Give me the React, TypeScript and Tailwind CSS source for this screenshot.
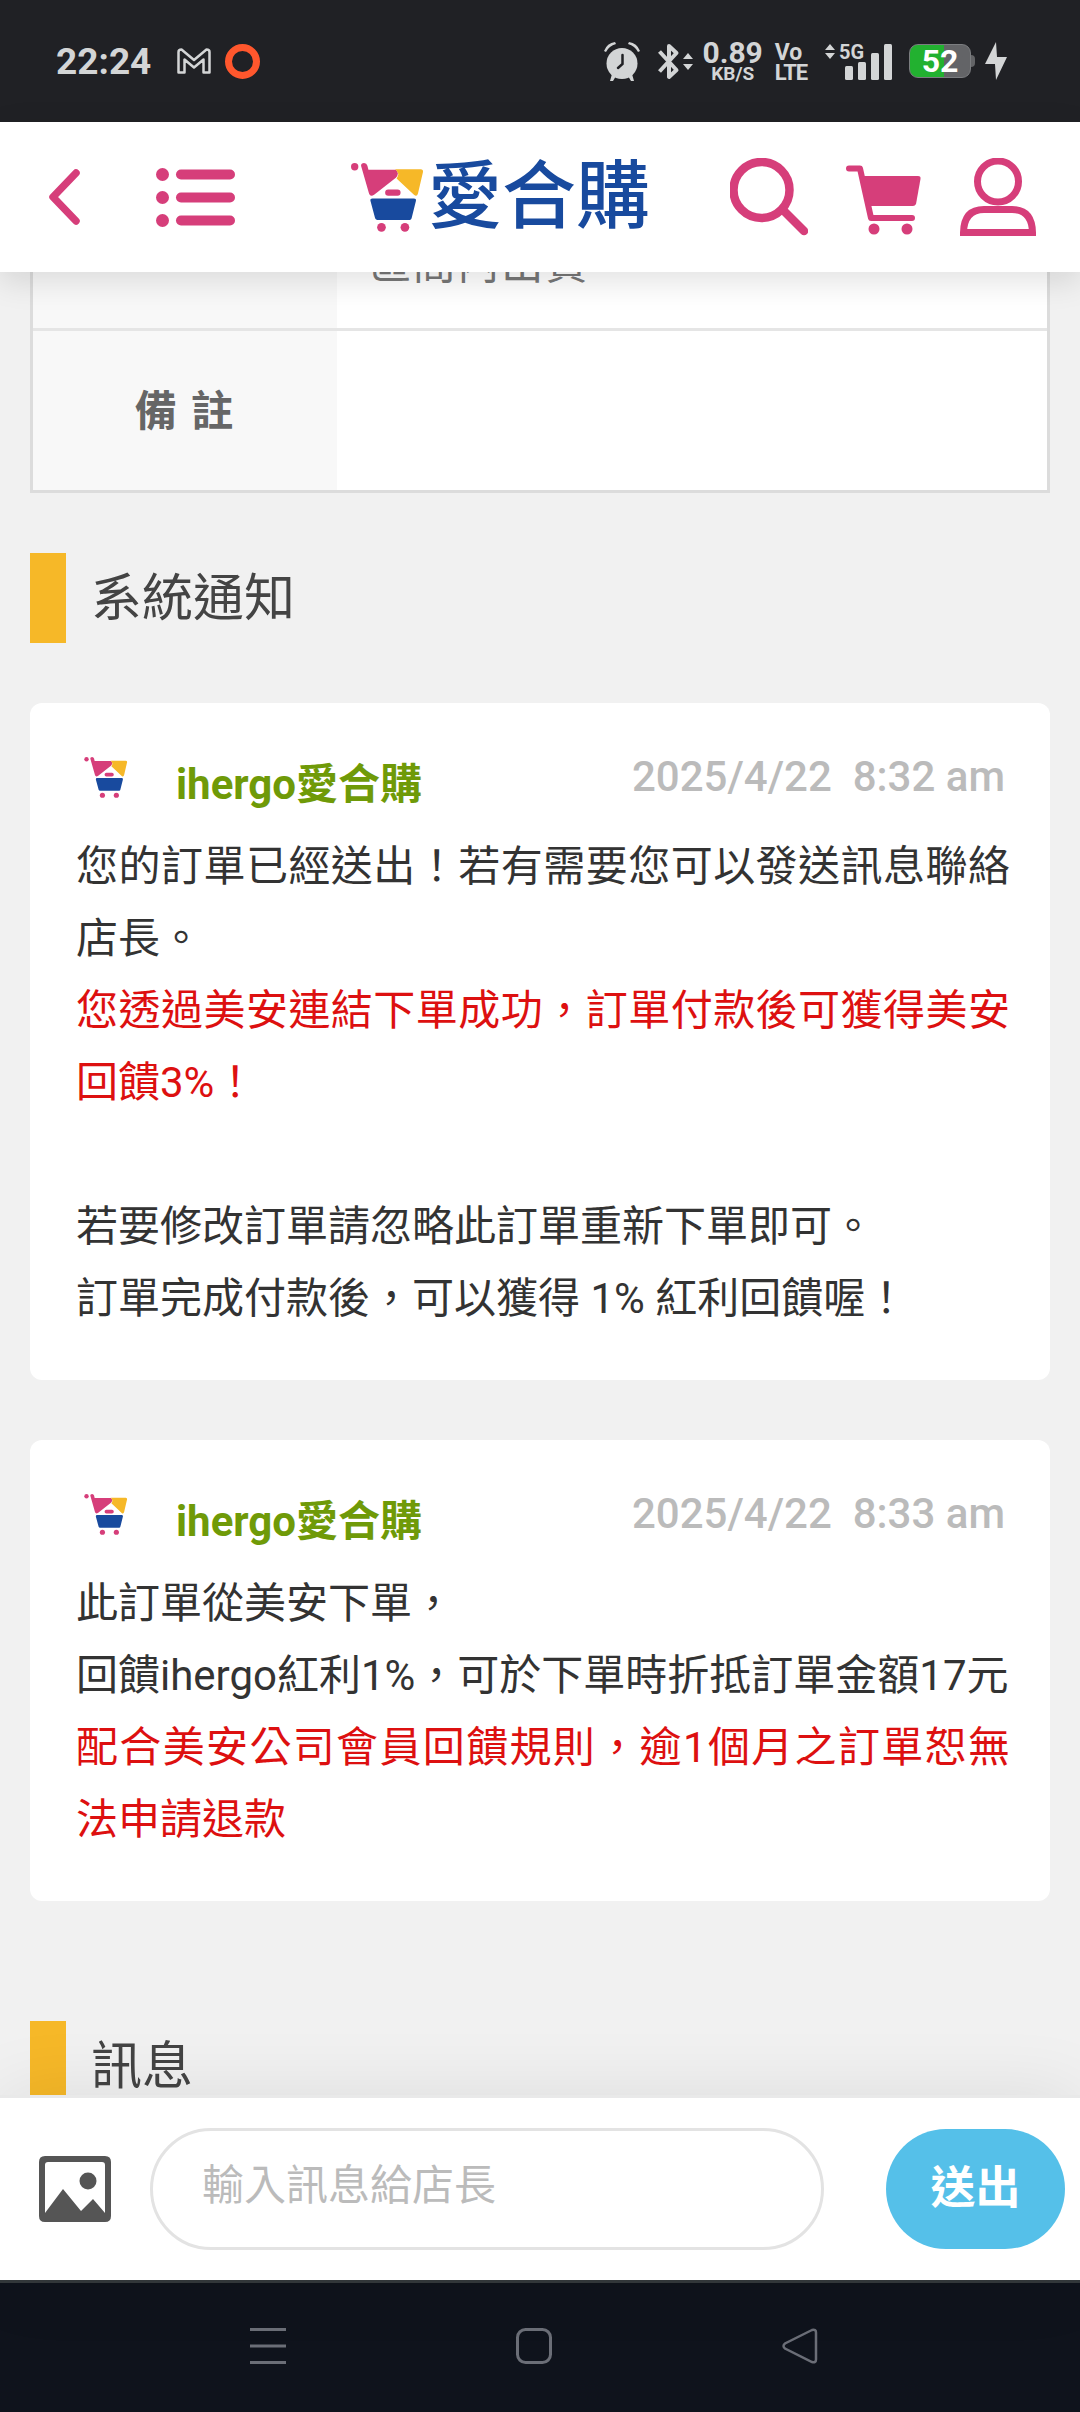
import React from 'react';

type Line = { text: string; alert?: boolean };

type Notice = {
  id: number;
  author: string;
  date: string;
  time: string;
  lines: Line[];
};

const NOTICES: Notice[] = [
  {
    id: 1,
    author: 'ihergo愛合購',
    date: '2025/4/22',
    time: '8:32 am',
    lines: [
      { text: '您的訂單已經送出！若有需要您可以發送訊息聯絡店長。' },
      { text: '您透過美安連結下單成功，訂單付款後可獲得美安回饋3%！', alert: true },
      { text: '' },
      { text: '若要修改訂單請忽略此訂單重新下單即可。' },
      { text: '訂單完成付款後，可以獲得 1% 紅利回饋喔！' },
    ],
  },
  {
    id: 2,
    author: 'ihergo愛合購',
    date: '2025/4/22',
    time: '8:33 am',
    lines: [
      { text: '此訂單從美安下單，' },
      { text: '回饋ihergo紅利1%，可於下單時折抵訂單金額17元' },
      { text: '配合美安公司會員回饋規則，逾1個月之訂單恕無法申請退款', alert: true },
    ],
  },
];

const CartLogo: React.FC<{ className: string }> = ({ className }) => (
  <svg viewBox="0 0 218 206" className={className} aria-hidden="true">
    <circle cx="11" cy="11" r="11" fill="#d63e7a" />
    <path d="M30 8q0-8 9-8 8 0 10 8l3 12h82q12 10 0 24L70 94q-12 8-16-2z" fill="#d63e7a" />
    <path d="M132 19h76q8 0 7 8l-15 64q-3 11-12 4l-52-49q12-14-4-27z" fill="#f6b828" />
    <rect x="102" y="79" width="46" height="19" rx="9" fill="#d63e7a" />
    <path d="M64 106h124q7 0 6 7l-13 52q-1 5-6 5H79q-5 0-7-5L58 113q-1-7 6-7z" fill="#184a9e" />
    <circle cx="91" cy="192" r="13" fill="#d63e7a" />
    <circle cx="161" cy="192" r="13" fill="#d63e7a" />
  </svg>
);

const StatusBar = () => (
  <div className="flex h-[122px] shrink-0 items-center justify-between bg-[#202125] pl-14 pr-[73px] text-[#d3d5d6]">
    <div className="flex items-center">
      <span className="text-[37px] leading-none font-bold">22:24</span>
      <svg viewBox="0 0 34 26" className="ml-[26px] h-[26px] w-[34px]" fill="none" stroke="currentColor" strokeWidth="2.5" strokeLinejoin="round">
        <path d="M1.5 4Q1.5 1.5 4.5 1.5L17 12 29.5 1.5Q32.5 1.5 32.5 4V24.5H26.5V11.5L17 19.5 7.5 11.5V24.5H1.5Z" />
      </svg>
      <span className="ml-[14px] size-[35px] rounded-full border-7 border-[#ff572d]" />
    </div>

    <div className="flex items-center">
      <svg viewBox="0 0 36 39" className="h-[39px] w-9" fill="currentColor">
        <circle cx="18" cy="21.5" r="15.5" />
        <path d="M0 9Q3 1 11 0L12 2Q5 4 2 10ZM36 9Q33 1 25 0L24 2Q31 4 34 10ZM8 32l4 2-3 5H6ZM28 32l-4 2 3 5h3Z" />
        <path d="M18.5 13v9l-4.5 4" fill="none" stroke="#202125" strokeWidth="2.5" strokeLinecap="round" />
      </svg>
      <svg viewBox="0 0 36 37" className="ml-[18px] h-[37px] w-9" fill="none" stroke="currentColor" strokeWidth="4">
        <path d="M1.5 8.5 18.5 27 11 34V3l7.5 7L1.5 28.5" strokeLinejoin="round" />
        <path d="M25 16l5-6 5 6ZM25 21l5 6 5-6Z" fill="currentColor" stroke="none" />
      </svg>
      <span className="ml-2 flex flex-col items-center pt-1 font-bold">
        <span className="text-[30px] leading-[22px]">0.89</span>
        <span className="text-[19px] leading-5">KB/S</span>
      </span>
      <span className="ml-3 flex flex-col pt-1 font-bold">
        <span className="text-[23px] leading-5">Vo</span>
        <span className="text-[22px] leading-5 tracking-tighter">LTE</span>
      </span>
      <svg viewBox="0 0 68 37" className="ml-[18px] h-[37px] w-[68px] overflow-visible" fill="currentColor">
        <path d="M0 7l5-6 5 6ZM0 10l5 6 5-6Z" />
        <text x="14" y="16" fontSize="20" fontWeight="700">5G</text>
        <rect x="20" y="23" width="8" height="14" rx="1.5" />
        <rect x="33" y="19" width="8" height="18" rx="1.5" />
        <rect x="46" y="10" width="8" height="27" rx="1.5" />
        <rect x="59" y="1" width="8" height="36" rx="1.5" />
      </svg>
      <span className="ml-4 flex items-center">
        <span className="flex h-[34px] w-[62px] items-center justify-center rounded-[9px] border border-[#7b7d80] bg-linear-to-r from-[#22b130] from-56% to-[#636467] to-56% text-[32px] leading-none font-bold text-white">
          52
        </span>
        <span className="h-3 w-1 rounded-r bg-[#636467]" />
      </span>
      <svg viewBox="0 0 22 38" className="ml-[10px] h-[38px] w-[22px]" fill="currentColor">
        <path d="M11 0 0 22H10L11 38 22 15H12Z" />
      </svg>
    </div>
  </div>
);

const Header = () => (
  <header className="relative z-10 flex h-[150px] shrink-0 items-center justify-between bg-white pr-11 pl-12 text-[#d63e7a] shadow-[0_9px_30px_rgba(0,0,0,0.12)]">
    <div className="mr-9 flex items-center gap-[76px]">
      <button type="button" aria-label="返回">
        <svg viewBox="0 0 32 56" className="h-14 w-8" fill="none" stroke="currentColor" strokeWidth="7.5" strokeLinecap="round" strokeLinejoin="round">
          <path d="M28 4 5 28 28 52" />
        </svg>
      </button>
      <button type="button" aria-label="選單">
        <svg viewBox="0 0 79 59" className="h-[59px] w-[79px]" fill="currentColor">
          <circle cx="6.5" cy="6.5" r="6.5" />
          <circle cx="6.5" cy="29.5" r="6.5" />
          <circle cx="6.5" cy="52.5" r="6.5" />
          <rect x="20" y="1.5" width="59" height="10" rx="5" />
          <rect x="20" y="24.5" width="59" height="10" rx="5" />
          <rect x="20" y="47.5" width="59" height="10" rx="5" />
        </svg>
      </button>
    </div>

    <a href="#home" className="flex items-center">
      <CartLogo className="h-[69px] w-[73px]" />
      <span className="ml-1 text-[74px] leading-none font-medium text-[#184a9e]">愛合購</span>
    </a>

    <div className="flex items-center gap-[38px]">
      <button type="button" aria-label="搜尋">
        <svg viewBox="0 0 78 78" className="size-[78px]" fill="none" stroke="currentColor" strokeWidth="8.5">
          <circle cx="31.5" cy="32" r="28" />
          <path d="M54 53 74 73" strokeLinecap="round" />
        </svg>
      </button>
      <button type="button" aria-label="購物車">
        <svg viewBox="0 0 76 78" className="h-[78px] w-[76px]" fill="currentColor">
          <path d="M3 10.5H14L25 60H66" fill="none" stroke="currentColor" strokeWidth="6" strokeLinecap="round" strokeLinejoin="round" />
          <path d="M16 18H72q3 0 2.5 3L70 46q-1 2-3 2H22Z" />
          <circle cx="28" cy="71" r="5.5" />
          <circle cx="61" cy="71" r="5.5" />
        </svg>
      </button>
      <button type="button" aria-label="會員">
        <svg viewBox="0 0 76 78" className="h-[78px] w-[76px]" fill="none" stroke="currentColor" strokeWidth="7">
          <circle cx="38" cy="23.5" r="20.5" />
          <path d="M3.5 74.5Q4 51.5 24 51.5H52Q72 51.5 72.5 74.5Z" />
        </svg>
      </button>
    </div>
  </header>
);

const SectionTitle: React.FC<{ children: React.ReactNode }> = ({ children }) => (
  <h2 className="flex h-[90px] items-center border-l-36 border-[#f6b828] pl-[25px] text-[51px] leading-none text-[#444]">
    {children}
  </h2>
);

const NoticeCard: React.FC<{ notice: Notice }> = ({ notice }) => (
  <article className="rounded-xl bg-white pr-10 pb-[45px] pl-[46px]">
    <div className="flex h-32 items-start pt-[54px] pr-[5px]">
      <CartLogo className="ml-2 h-[41px] w-11" />
      <span className="ml-12 pt-1 text-[42px] leading-[48px] font-bold text-[#6f9a08]">{notice.author}</span>
      <time className="ml-auto text-[42px] leading-10 font-medium whitespace-pre text-[#bbb]">
        {`${notice.date}  ${notice.time}`}
      </time>
    </div>
    {notice.lines.map((line, i) => (
      <p key={i} className={`min-h-[72px] text-justify text-[42px] leading-[72px] ${line.alert ? 'text-[#dd1010]' : 'text-[#333]'}`}>
        {line.text}
      </p>
    ))}
  </article>
);

const MessageBar = () => (
  <form
    className="relative z-10 flex shrink-0 items-center border-t-3 border-[#e9e9e9] bg-white py-[30px] pr-[15px] pl-[39px] shadow-[0_0_75px_rgba(0,0,0,0.09)]"
    onSubmit={(e) => e.preventDefault()}
  >
    <button type="button" aria-label="傳送圖片">
      <svg viewBox="0 0 72 66" className="h-[66px] w-[72px]" fill="#555">
        <path fillRule="evenodd" d="M6 0H66Q72 0 72 6V60Q72 66 66 66H6Q0 66 0 60V6Q0 0 6 0ZM9 6Q6 6 6 9V57L24 33 42 55 54 43 66 57V9Q66 6 63 6Z" />
        <circle cx="49" cy="25" r="8.5" />
      </svg>
    </button>
    <input
      type="text"
      aria-label="輸入訊息給店長"
      placeholder="輸入訊息給店長"
      className="ml-[39px] h-[122px] min-w-0 flex-1 rounded-full border-3 border-[#e3e3e3] px-[49px] pb-2 text-[42px] text-[#333] placeholder:text-[#bbb]"
    />
    <button type="submit" className="ml-[62px] h-[120px] w-[179px] rounded-full bg-[#55c0e9] text-[45px] font-bold text-white">
      送出
    </button>
  </form>
);

const NavBar = () => (
  <nav className="flex h-[132px] shrink-0 items-center justify-center gap-[230px] border-t-3 border-[#34393c] bg-[#0f131c] pr-3 pb-1 text-[#6b6e77]">
    <button type="button" aria-label="最近使用">
      <svg viewBox="0 0 36 36" className="size-9" fill="none" stroke="currentColor" strokeWidth="3">
        <path d="M0 1.5H36M0 18H36M0 34.5H36" />
      </svg>
    </button>
    <button type="button" aria-label="主畫面">
      <svg viewBox="0 0 36 36" className="size-9" fill="none" stroke="currentColor" strokeWidth="3">
        <rect x="1.5" y="1.5" width="33" height="33" rx="8" />
      </svg>
    </button>
    <button type="button" aria-label="返回上一頁">
      <svg viewBox="0 0 36 36" className="size-9" fill="none" stroke="currentColor" strokeWidth="2.5">
        <path d="M30 2 3 15.5Q0 18 3 20.5L30 34Q34 35 34 31.5V4.5Q34 1 30 2Z" />
      </svg>
    </button>
  </nav>
);

export default function App() {
  return (
    <div lang="zh-Hant" className="flex h-screen flex-col bg-[#f1f1f1] font-['Roboto','Noto_Sans_CJK_TC',sans-serif]">
      <StatusBar />
      <Header />

      <main className="min-h-0 flex-1 overflow-hidden px-[30px]">
        <table className="-mt-[81px] w-full border-separate border-spacing-0 border-3 border-[#dcdcdc] bg-white text-[42px] leading-[72px] tracking-wider">
          <tbody>
            <tr>
              <td className="w-[304px] bg-[#f8f8f8]" />
              <td className="pt-[35px] pb-[27px] pl-8 text-[#777]">區間內出貨</td>
            </tr>
            <tr>
              <th scope="row" className="border-t-3 border-[#e5e5e5] bg-[#f8f8f8] pt-[45px] pb-[42px] font-bold text-[#666]">
                備 註
              </th>
              <td className="border-t-3 border-[#e5e5e5]" />
            </tr>
          </tbody>
        </table>

        <section className="mt-[60px]">
          <SectionTitle>系統通知</SectionTitle>
          <div className="mt-[60px] flex flex-col gap-[60px]">
            {NOTICES.map((notice) => (
              <NoticeCard key={notice.id} notice={notice} />
            ))}
          </div>
        </section>

        <section className="mt-[120px]">
          <SectionTitle>訊息</SectionTitle>
        </section>
      </main>

      <MessageBar />
      <NavBar />
    </div>
  );
}
